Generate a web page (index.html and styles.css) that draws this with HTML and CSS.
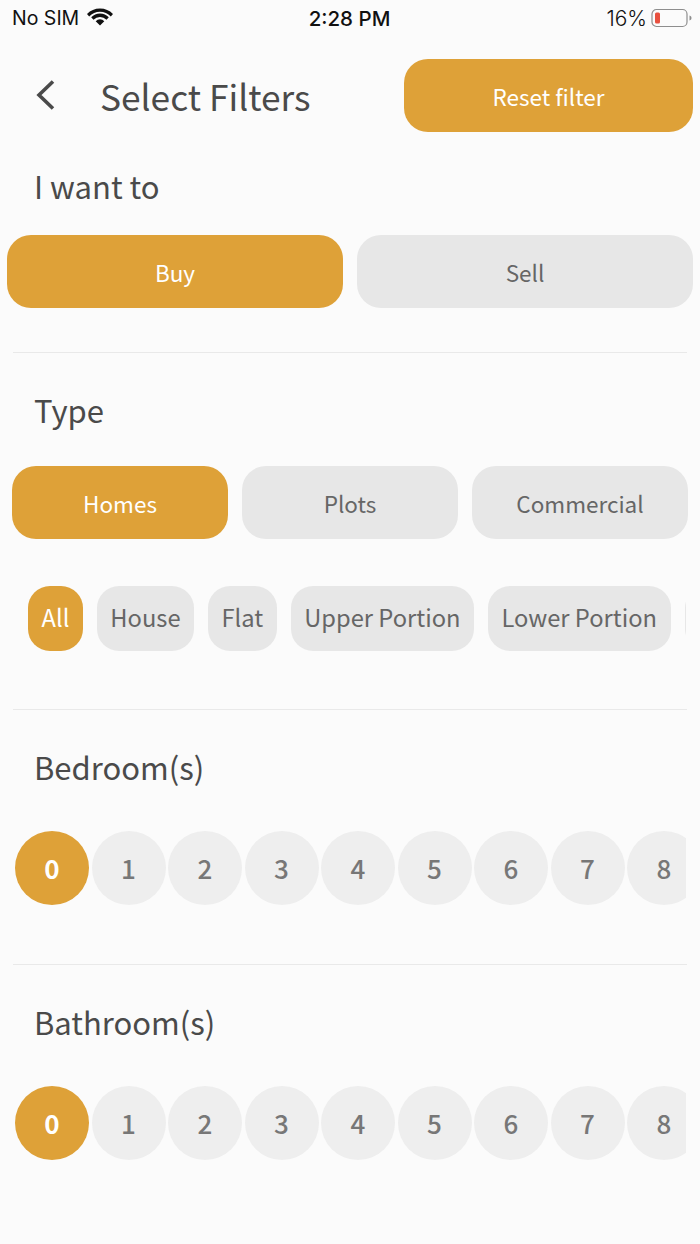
FILE: index.html
```html
<!DOCTYPE html>
<html lang="en">
<head>
<meta charset="utf-8">
<title>Select Filters</title>
<link rel="stylesheet" href="styles.css">
</head>
<body>
<div class="status">
  <div class="status-left">
    <span>No SIM</span>
    <svg class="wifi" width="26" height="18" viewBox="0 0 26 18"><path d="M13 0.500a18 18 0 0 1 13 5.500l-2.200 2.400a15 15 0 0 0-21.600 0L0 6a18 18 0 0 1 13-5.500z" fill="#111"/><path d="M13 5.500a12 12 0 0 1 8.800 3.800l-2.300 2.400a9 9 0 0 0-13 0L4.200 9.300A12 12 0 0 1 13 5.500z" fill="#111"/><path d="M13 11.300a6 6 0 0 1 4.300 1.900L13 17.500 8.700 13.200a6 6 0 0 1 4.300-1.900z" fill="#111"/></svg>
  </div>
  <div class="status-time">2:28 PM</div>
  <div class="status-right">
    <span>16%</span>
    <svg class="battery" width="42" height="20" viewBox="0 0 42 20"><rect x="1" y="1.500" width="35" height="17" rx="4.500" fill="none" stroke="#8e8e8e" stroke-width="1.200"/><rect x="4" y="4.500" width="5" height="11" rx="1.500" fill="#e8503f"/><path d="M38.500 7.500c1.500.4 2 1.300 2 2.500s-.5 2.100-2 2.500z" fill="#8e8e8e"/></svg>
  </div>
</div>

<header class="header">
  <div class="title-group">
    <svg class="back" width="20" height="32" viewBox="0 0 20 32"><path d="M17 2.500 3 16l14 13.500" fill="none" stroke="#4a4a4a" stroke-width="3.600"/></svg>
    <h1 class="title">Select Filters</h1>
  </div>
  <div class="btn on reset">Reset filter</div>
</header>

<h2 class="label want">I want to</h2>
<div class="row row-wide">
  <div class="btn on">Buy</div>
  <div class="btn">Sell</div>
</div>
<hr class="rule rule-a">

<h2 class="label">Type</h2>
<div class="row row-type">
  <div class="btn on">Homes</div>
  <div class="btn">Plots</div>
  <div class="btn">Commercial</div>
</div>
<div class="chips">
  <div class="chip on">All</div>
  <div class="chip">House</div>
  <div class="chip">Flat</div>
  <div class="chip">Upper Portion</div>
  <div class="chip">Lower Portion</div>
  <div class="chip chip-next"></div>
</div>
<hr class="rule rule-b">

<h2 class="label label-num">Bedroom(s)</h2>
<div class="nums">
  <div class="num on">0</div><div class="num">1</div><div class="num">2</div><div class="num">3</div><div class="num">4</div><div class="num">5</div><div class="num">6</div><div class="num">7</div><div class="num">8</div>
</div>
<hr class="rule rule-c">

<h2 class="label label-num">Bathroom(s)</h2>
<div class="nums">
  <div class="num on">0</div><div class="num">1</div><div class="num">2</div><div class="num">3</div><div class="num">4</div><div class="num">5</div><div class="num">6</div><div class="num">7</div><div class="num">8</div>
</div>
</body>
</html>
```

FILE: styles.css
```css
* { box-sizing: border-box; }

html, body { height: 100%; }

body {
  margin: 0;
  background: #fbfbfb;
  color: #4a4a4a;
  font-family: "Noto Sans CJK SC", "Noto Sans", sans-serif;
  overflow: hidden;
}

.status {
  height: 36px;
  padding: 0 7px 0 12px;
  display: grid;
  grid-template-columns: 1fr auto 1fr;
  align-items: center;
  font-family: "Inter", "Liberation Sans", sans-serif;
  font-size: 19.500px;
  color: #111;
}

.status-left { display: flex; align-items: center; gap: 8px; }
.wifi { margin-top: -3px; }
.status-time { font-size: 20.500px; font-weight: 500; margin-left: -6px; }
.status-right { display: flex; align-items: center; justify-content: flex-end; gap: 4px; font-size: 21px; font-weight: 300; }

.header {
  margin-top: 23px;
  padding: 0 7px 0 36px;
  display: flex;
  align-items: center;
  justify-content: space-between;
}

.title-group { display: flex; align-items: center; gap: 44px; }
.back { display: block; margin-top: -2px; }

.title {
  margin: 0;
  font-size: 35.300px;
  font-weight: 400;
  line-height: 50px;
}

.btn {
  height: 73px;
  padding-top: 1px;
  border-radius: 24px;
  background: #e7e7e7;
  color: #666;
  font-size: 22.500px;
  font-weight: 400;
  display: flex;
  align-items: center;
  justify-content: center;
}

.on { background: #dea138; color: #fff; }
.reset { width: 289px; }

.label {
  margin: 35px 0 34px 34px;
  font-size: 31px;
  font-weight: 400;
  line-height: 44px;
}

.want { margin-top: 32px; margin-bottom: 27px; }
.label-num { margin-bottom: 42px; }

.row { display: grid; gap: 14px; }
.row-wide { grid-template-columns: 1fr 1fr; padding: 0 7px; }
.row-type { grid-template-columns: 1fr 1fr 1fr; padding: 0 12px; }

.rule {
  margin: 44px 13px 0;
  border: 0;
  height: 1px;
  background: #e9e9e9;
}

.rule-b { margin-top: 58px; }
.rule-c { margin-top: 59px; }

.chips {
  margin: 47px 14px 0 28px;
  display: flex;
  gap: 14px;
  overflow: hidden;
}

.chip {
  flex: none;
  height: 65px;
  padding: 0 13.500px 3px;
  border-radius: 22px;
  background: #e7e7e7;
  color: #666;
  font-size: 23.700px;
  font-weight: 400;
  display: flex;
  align-items: center;
}

.chip.on { background: #dea138; color: #fff; }
.chip-next { width: 60px; }

.nums {
  margin: 0 14px 0 15px;
  display: flex;
  gap: 2.500px;
  overflow: hidden;
}

.num {
  flex: none;
  width: 74px;
  height: 74px;
  padding-bottom: 2px;
  border-radius: 50%;
  background: #eeeeee;
  color: #777;
  font-size: 26px;
  font-weight: 500;
  display: flex;
  align-items: center;
  justify-content: center;
}

.num.on { background: #dea138; color: #fff; font-weight: 700; }
```
